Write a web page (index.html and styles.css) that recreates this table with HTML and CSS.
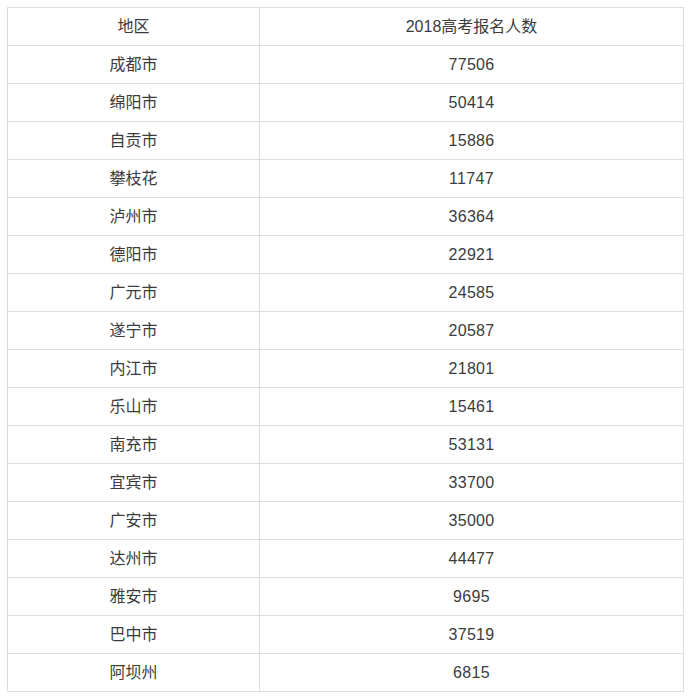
FILE: index.html
```html
<!DOCTYPE html>
<html lang="zh">
<head>
<meta charset="utf-8">
<link rel="stylesheet" href="styles.css">
</head>
<body>
<table class="data">
<thead>
<tr><th class="c1">地区</th><th class="c2">2018高考报名人数</th></tr>
</thead>
<tbody>
<tr><td>成都市</td><td class="num">77506</td></tr>
<tr><td>绵阳市</td><td class="num">50414</td></tr>
<tr><td>自贡市</td><td class="num">15886</td></tr>
<tr><td>攀枝花</td><td class="num">11747</td></tr>
<tr><td>泸州市</td><td class="num">36364</td></tr>
<tr><td>德阳市</td><td class="num">22921</td></tr>
<tr><td>广元市</td><td class="num">24585</td></tr>
<tr><td>遂宁市</td><td class="num">20587</td></tr>
<tr><td>内江市</td><td class="num">21801</td></tr>
<tr><td>乐山市</td><td class="num">15461</td></tr>
<tr><td>南充市</td><td class="num">53131</td></tr>
<tr><td>宜宾市</td><td class="num">33700</td></tr>
<tr><td>广安市</td><td class="num">35000</td></tr>
<tr><td>达州市</td><td class="num">44477</td></tr>
<tr><td>雅安市</td><td class="num">9695</td></tr>
<tr><td>巴中市</td><td class="num">37519</td></tr>
<tr><td>阿坝州</td><td class="num">6815</td></tr>
</tbody>
</table>
</body>
</html>
```
FILE: styles.css
```css
html, body {
  margin: 0;
  padding: 0;
  background: #ffffff;
}
body {
  padding: 7px;
  font-family: "Liberation Sans", "Noto Sans CJK SC", sans-serif;
  font-size: 16px;
  color: #3c3c3c;
}
.data {
  border-collapse: collapse;
  width: 677px;
  table-layout: fixed;
}
.data th,
.data td {
  border: 1px solid #dddddd;
  height: 37px;
  padding: 0;
  text-align: center;
  vertical-align: middle;
  font-weight: normal;
  line-height: 20px;
}
.c1 { width: 251px; }
.num { letter-spacing: 0.3px; }
```
